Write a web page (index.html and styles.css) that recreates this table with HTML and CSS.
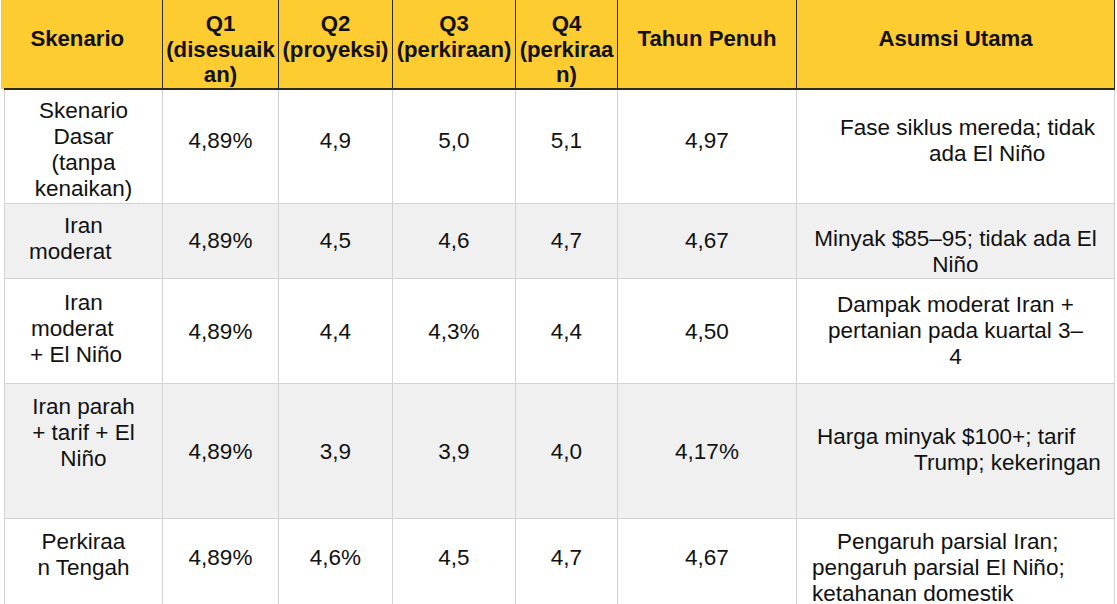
FILE: index.html
```html
<!DOCTYPE html>
<html lang="id">
<head>
<meta charset="utf-8">
<title>Skenario inflasi</title>
<link rel="stylesheet" href="styles.css">
</head>
<body>
<table class="grid">
  <colgroup>
    <col class="c1"><col class="c2"><col class="c3"><col class="c4"><col class="c5"><col class="c6"><col class="c7">
  </colgroup>
  <thead>
    <tr>
      <th class="one first">Skenario</th>
      <th>Q1<br>(disesuaik<br>an)</th>
      <th>Q2<br>(proyeksi)</th>
      <th>Q3<br>(perkiraan)</th>
      <th>Q4<br>(perkiraa<br>n)</th>
      <th class="one">Tahun Penuh</th>
      <th class="one">Asumsi Utama</th>
    </tr>
  </thead>
  <tbody>
    <tr class="r1">
      <td class="sk"><span class="ln">Skenario</span><span class="ln">Dasar</span><span class="ln">(tanpa</span><span class="ln">kenaikan)</span></td>
      <td class="n">4,89%</td>
      <td class="n">4,9</td>
      <td class="n">5,0</td>
      <td class="n">5,1</td>
      <td class="n">4,97</td>
      <td class="as"><span class="ln lf i39">Fase siklus mereda; tidak</span><span class="ln lf i128">ada El Niño</span></td>
    </tr>
    <tr class="r2">
      <td class="sk"><span class="ln">Iran</span><span class="ln lf i20">moderat</span></td>
      <td class="n">4,89%</td>
      <td class="n">4,5</td>
      <td class="n">4,6</td>
      <td class="n">4,7</td>
      <td class="n">4,67</td>
      <td class="as"><span class="ln">Minyak $85–95; tidak ada El</span><span class="ln">Niño</span></td>
    </tr>
    <tr class="r3">
      <td class="sk"><span class="ln">Iran</span><span class="ln lf i22">moderat</span><span class="ln lf i21">+ El Niño</span></td>
      <td class="n">4,89%</td>
      <td class="n">4,4</td>
      <td class="n">4,3%</td>
      <td class="n">4,4</td>
      <td class="n">4,50</td>
      <td class="as"><span class="ln">Dampak moderat Iran +</span><span class="ln">pertanian pada kuartal 3–</span><span class="ln">4</span></td>
    </tr>
    <tr class="r4">
      <td class="sk"><span class="ln">Iran parah</span><span class="ln">+ tarif + El</span><span class="ln">Niño</span></td>
      <td class="n">4,89%</td>
      <td class="n">3,9</td>
      <td class="n">3,9</td>
      <td class="n">4,0</td>
      <td class="n">4,17%</td>
      <td class="as"><span class="ln lf i16">Harga minyak $100+; tarif</span><span class="ln lf i113">Trump; kekeringan</span></td>
    </tr>
    <tr class="r5">
      <td class="sk"><span class="ln">Perkiraa</span><span class="ln">n Tengah</span></td>
      <td class="n">4,89%</td>
      <td class="n">4,6%</td>
      <td class="n">4,5</td>
      <td class="n">4,7</td>
      <td class="n">4,67</td>
      <td class="as"><span class="ln lf i36">Pengaruh parsial Iran;</span><span class="ln lf i11">pengaruh parsial El Niño;</span><span class="ln lf i11">ketahanan domestik</span></td>
    </tr>
  </tbody>
</table>
</body>
</html>
```

FILE: styles.css
```css
body {
  margin: 0;
  background: #ffffff;
  font-family: "Liberation Sans", Arial, sans-serif;
  color: #111111;
  overflow: hidden;
}

.grid {
  border-collapse: collapse;
  table-layout: fixed;
  width: 1111px;
  margin-left: 4px;
}

.c1 { width: 158px; }
.c2 { width: 116px; }
.c3 { width: 114px; }
.c4 { width: 123px; }
.c5 { width: 102px; }
.c6 { width: 179px; }
.c7 { width: 318px; }

thead tr { height: 89px; }

th {
  background: #fccc31;
  font-weight: bold;
  font-size: 22.2px;
  line-height: 25.5px;
  vertical-align: top;
  text-align: center;
  white-space: nowrap;
  padding: 11px 3px 0;
  border-left: 1px solid #2e2a1c;
  border-right: 1px solid #2e2a1c;
  border-bottom: 2px solid #2e2a1c;
}

th.one { padding-top: 26px; }

th.first {
  border-left: none;
  padding-right: 15px;
  box-shadow: -4px 0 0 #fccc31;
}

td {
  font-size: 22.5px;
  line-height: 26px;
  vertical-align: top;
  text-align: center;
  white-space: nowrap;
  padding: 0 4px;
  border: 1px solid #d3d3d3;
}

tbody tr:nth-child(even) td { background: #f0f0f0; }

.ln { display: block; }
.lf { text-align: left; }

.i11 { padding-left: 11px; }
.i16 { padding-left: 16px; }
.i20 { padding-left: 20px; }
.i21 { padding-left: 21px; }
.i22 { padding-left: 22px; }
.i36 { padding-left: 36px; }
.i39 { padding-left: 39px; }
.i113 { padding-left: 113px; }
.i128 { padding-left: 128px; }

.r1 { height: 114px; }
.r2 { height: 75px; }
.r3 { height: 105px; }
.r4 { height: 135px; }
.r5 { height: 100px; }

.r1 .sk { padding-top: 8px; }
.r1 .n { padding-top: 38px; }
.r1 .as { padding-top: 25px; }

.r2 .sk { padding-top: 9px; }
.r2 .n { padding-top: 24px; }
.r2 .as { padding-top: 22px; }

.r3 .sk { padding-top: 11px; }
.r3 .n { padding-top: 40px; }
.r3 .as { padding-top: 13px; }

.r4 .sk { padding-top: 10px; }
.r4 .n { padding-top: 55px; }
.r4 .as { padding-top: 40px; }

.r5 .sk { padding-top: 10px; }
.r5 .n { padding-top: 26px; }
.r5 .as { padding-top: 10px; }
```
